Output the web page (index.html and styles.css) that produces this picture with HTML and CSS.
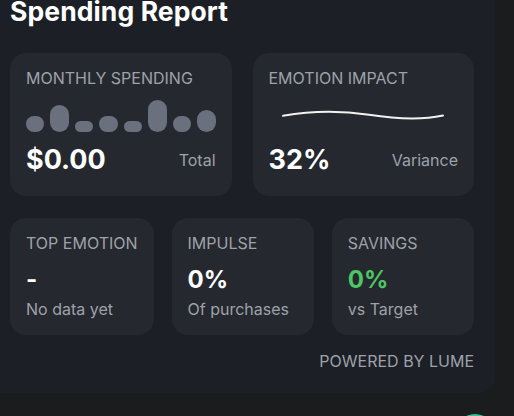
FILE: index.html
```html
<!DOCTYPE html>
<html>
<head>
<meta charset="utf-8">
<link rel="stylesheet" href="styles.css">
</head>
<body>
<div class="panel">
  <h1 class="title">Spending Report</h1>
  <div class="row row-two">
    <div class="card card-big">
      <div class="label">MONTHLY SPENDING</div>
      <div class="bars">
        <span class="bar" style="height:16px"></span>
        <span class="bar" style="height:27px"></span>
        <span class="bar" style="height:11px"></span>
        <span class="bar" style="height:16px"></span>
        <span class="bar" style="height:11px"></span>
        <span class="bar" style="height:32px"></span>
        <span class="bar" style="height:16px"></span>
        <span class="bar" style="height:22px"></span>
      </div>
      <div class="foot">
        <span class="big-value">$0.00</span>
        <span class="sub">Total</span>
      </div>
    </div>
    <div class="card card-big">
      <div class="label">EMOTION IMPACT</div>
      <svg class="wave" viewBox="0 0 189 32" width="189" height="32">
        <path d="M14 15.8 C40 11.2 72 10.6 100 14.8 C126 18.8 150 20.6 174 15.6" fill="none" stroke="#f2f2f2" stroke-width="2" stroke-linecap="round"/>
      </svg>
      <div class="foot">
        <span class="big-value">32%</span>
        <span class="sub">Variance</span>
      </div>
    </div>
  </div>
  <div class="row row-three">
    <div class="card card-small">
      <div class="label">TOP EMOTION</div>
      <div class="mid-value">-</div>
      <div class="sub">No data yet</div>
    </div>
    <div class="card card-small">
      <div class="label">IMPULSE</div>
      <div class="mid-value">0%</div>
      <div class="sub">Of purchases</div>
    </div>
    <div class="card card-small">
      <div class="label">SAVINGS</div>
      <div class="mid-value green">0%</div>
      <div class="sub">vs Target</div>
    </div>
  </div>
  <div class="powered">POWERED BY LUME</div>
</div>
<div class="fab"></div>
</body>
</html>
```

FILE: styles.css
```css
html, body {
  margin: 0;
  padding: 0;
  background: #1b1c1e;
  height: 416px;
  overflow: hidden;
  font-family: Inter, "Liberation Sans", sans-serif;
}

.panel {
  width: 495px;
  height: 393px;
  box-sizing: border-box;
  padding: 0 21px 0 10px;
  background: #1c1f26;
  border-radius: 0 0 16px 0;
}

.title {
  margin: 0;
  font-size: 26.5px;
  line-height: 23px;
  font-weight: 700;
  color: #ffffff;
  letter-spacing: 0.1px;
}

.row {
  display: grid;
}

.row-two {
  grid-template-columns: 1fr 1fr;
  column-gap: 21px;
  margin-top: 30px;
}

.row-three {
  grid-template-columns: 1fr 1fr 1fr;
  column-gap: 18px;
  margin-top: 21.5px;
}

.card {
  background: #25282e;
  border-radius: 16px;
  padding: 16px;
  box-sizing: border-box;
  display: flex;
  flex-direction: column;
}

.card-big {
  height: 143px;
}

.card-small {
  height: 117.5px;
}

.label {
  font-size: 16px;
  line-height: 1.21;
  color: #9ea2aa;
  white-space: nowrap;
}

.bars {
  display: flex;
  align-items: flex-end;
  gap: 6px;
  height: 32px;
  margin-top: 11.6px;
}

.bar {
  flex: 1;
  background: #6b707e;
  border-radius: 999px;
}

.wave {
  display: block;
  margin-top: 11.6px;
}

.foot {
  display: flex;
  justify-content: space-between;
  align-items: center;
  margin-top: 12px;
}

.big-value {
  font-size: 27px;
  line-height: 1.21;
  font-weight: 700;
  color: #ffffff;
}

.sub {
  font-size: 16px;
  line-height: 1.21;
  color: #9ea2aa;
  white-space: nowrap;
}

.mid-value {
  font-size: 24px;
  line-height: 1.21;
  font-weight: 700;
  color: #ffffff;
  margin-top: 12.5px;
  margin-bottom: 5.5px;
}

.mid-value.green {
  color: #4cc764;
}

.powered {
  margin-top: 17px;
  text-align: right;
  font-size: 16px;
  line-height: 1.21;
  color: #9ea2aa;
}

.fab {
  position: absolute;
  left: 455px;
  top: 414px;
  width: 40px;
  height: 40px;
  border-radius: 50%;
  background: #3cc08e;
}
```
